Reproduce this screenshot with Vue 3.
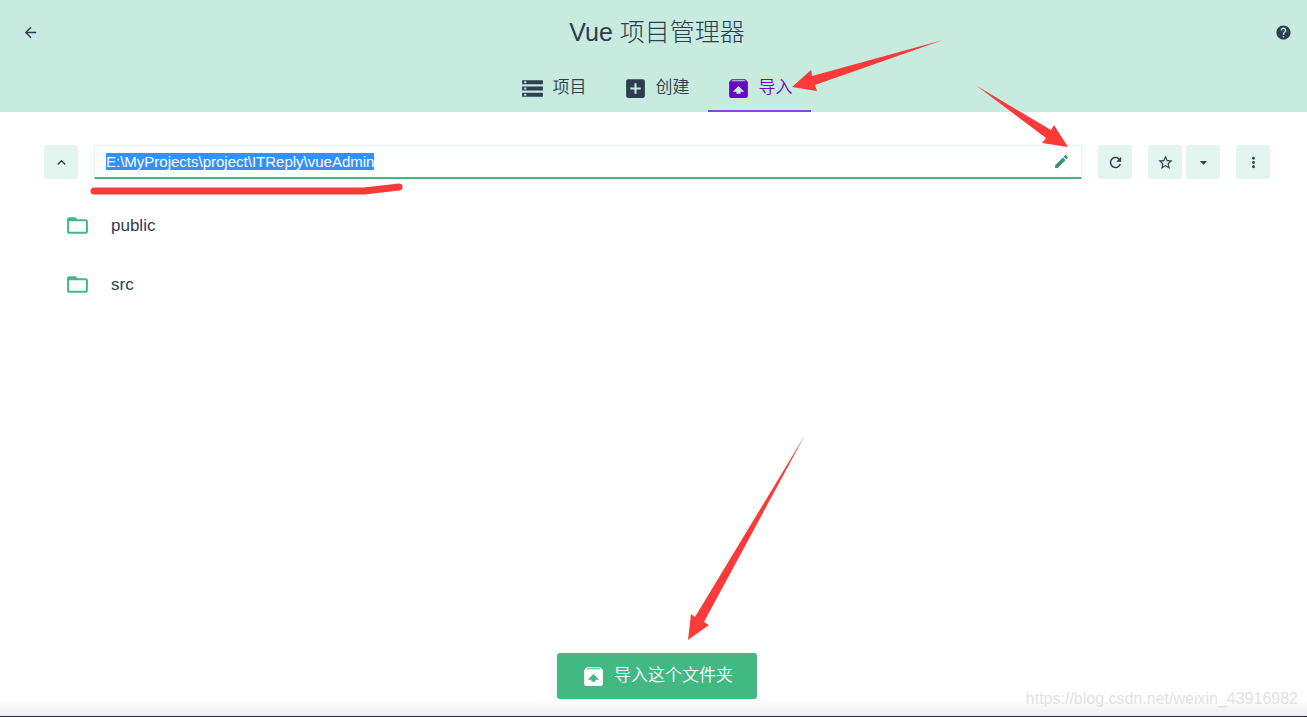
<script setup>
import { ref, onMounted } from 'vue'

const icons = {
  back: 'M20 11H7.83l5.59-5.59L12 4l-8 8 8 8 1.41-1.41L7.83 13H20v-2z',
  help: 'M12 2C6.48 2 2 6.48 2 12s4.48 10 10 10 10-4.48 10-10S17.52 2 12 2zm1 17h-2v-2h2v2zm2.07-7.75l-.9.92C13.45 12.9 13 13.5 13 15h-2v-.5c0-1.1.45-2.1 1.17-2.83l1.24-1.26c.37-.36.59-.86.59-1.41 0-1.1-.9-2-2-2s-2 .9-2 2H8c0-2.21 1.79-4 4-4s4 1.79 4 4c0 .88-.36 1.68-.93 2.25z',
  storage: 'M2 20h20v-4H2v4zm2-3h2v2H4v-2zM2 4v4h20V4H2zm4 3H4V5h2v2zm-4 7h20v-4H2v4zm2-3h2v2H4v-2z',
  addBox: 'M19 3H5c-1.11 0-2 .9-2 2v14c0 1.1.89 2 2 2h14c1.1 0 2-.9 2-2V5c0-1.1-.9-2-2-2zm-2 10h-4v4h-2v-4H7v-2h4V7h2v4h4v2z',
  unarchive: 'M20.55 5.22l-1.39-1.68C18.88 3.21 18.47 3 18 3H6c-.47 0-.88.21-1.15.55L3.46 5.22C3.17 5.57 3 6.01 3 6.5V19c0 1.1.89 2 2 2h14c1.1 0 2-.9 2-2V6.5c0-.49-.17-.93-.45-1.28zM12 9.5l5.5 5.5H14v2h-4v-2H6.5L12 9.5zM5.12 5l.82-1h12l.93 1H5.12z',
  up: 'M7.41 15.41L12 10.83l4.59 4.58L18 14l-6-6-6 6z',
  edit: 'M3 17.25V21h3.75L17.81 9.94l-3.75-3.75L3 17.25zM20.71 7.04c.39-.39.39-1.02 0-1.41l-2.34-2.34c-.39-.39-1.02-.39-1.41 0l-1.83 1.83 3.75 3.75 1.83-1.83z',
  refresh: 'M17.65 6.35C16.2 4.9 14.21 4 12 4c-4.42 0-7.99 3.58-7.99 8s3.57 8 7.99 8c3.73 0 6.84-2.55 7.73-6h-2.08c-.82 2.33-3.04 4-5.65 4-3.31 0-6-2.69-6-6s2.69-6 6-6c1.66 0 3.14.69 4.22 1.78L13 11h7V4l-2.35 2.35z',
  star: 'M22 9.24l-7.19-.62L12 2 9.19 8.63 2 9.24l5.46 4.73L5.82 21 12 17.27 18.18 21l-1.63-7.03L22 9.24zM12 15.4l-3.76 2.27 1-4.28-3.32-2.88 4.38-.38L12 6.1l1.71 4.04 4.38.38-3.32 2.88 1 4.28L12 15.4z',
  down: 'M7 10l5 5 5-5z',
  more: 'M12 8c1.1 0 2-.9 2-2s-.9-2-2-2-2 .9-2 2 .9 2 2 2zm0 2c-1.1 0-2 .9-2 2s.9 2 2 2 2-.9 2-2-.9-2-2-2zm0 6c-1.1 0-2 .9-2 2s.9 2 2 2 2-.9 2-2-.9-2-2-2z',
  folder: 'M20 6h-8l-2-2H4c-1.1 0-1.99.9-1.99 2L2 18c0 1.1.9 2 2 2h16c1.1 0 2-.9 2-2V8c0-1.1-.9-2-2-2zm0 12H4V8h16v10z'
}

const tabs = [
  { id: 'projects', label: '项目', icon: 'storage' },
  { id: 'create', label: '创建', icon: 'addBox' },
  { id: 'import', label: '导入', icon: 'unarchive' }
]
const active = ref('import')
const folders = ['public', 'src']
const path = ref('E:\\MyProjects\\project\\ITReply\\vueAdmin')
const pathInput = ref(null)

onMounted(() => {
  pathInput.value.focus()
  pathInput.value.select()
})
</script>

<template>
  <div class="page">
    <header class="header">
      <div class="title-row">
        <button class="plain" aria-label="返回">
          <svg class="icon small" viewBox="0 0 24 24"><path :d="icons.back" /></svg>
        </button>
        <h1>Vue 项目管理器</h1>
        <button class="plain" aria-label="帮助">
          <svg class="icon small" viewBox="0 0 24 24"><path :d="icons.help" /></svg>
        </button>
      </div>
      <nav class="tabs">
        <a
          v-for="tab in tabs"
          :key="tab.id"
          :href="'#' + tab.id"
          class="tab"
          :class="{ active: active === tab.id }"
          @click.prevent="active = tab.id"
        >
          <svg class="icon" viewBox="0 0 24 24"><path :d="icons[tab.icon]" /></svg>
          <span>{{ tab.label }}</span>
        </a>
        <svg class="mark mark-tab" viewBox="0 0 152 52" aria-hidden="true">
          <path d="M0 47L19 30L20 36L151 0L23 45L25 51Z" />
        </svg>
      </nav>
    </header>

    <main class="content">
      <div class="toolbar">
        <button class="tool" aria-label="上级目录">
          <svg class="icon small" viewBox="0 0 24 24"><path :d="icons.up" /></svg>
        </button>
        <div class="field">
          <input ref="pathInput" v-model="path" type="text" aria-label="路径" spellcheck="false" />
          <button class="plain edit" aria-label="编辑路径">
            <svg class="icon small" viewBox="0 0 24 24"><path :d="icons.edit" /></svg>
          </button>
          <svg class="mark mark-edit" viewBox="0 0 92 62" aria-hidden="true">
            <path d="M0 0L74 44L77 39L91 61L65 57L69 52Z" />
          </svg>
          <svg class="mark mark-line" viewBox="0 0 314 14" aria-hidden="true">
            <polyline points="5,9 275,9 310,5" />
          </svg>
        </div>
        <button class="tool" aria-label="刷新">
          <svg class="icon small" viewBox="0 0 24 24"><path :d="icons.refresh" /></svg>
        </button>
        <div class="pair">
          <button class="tool" aria-label="收藏">
            <svg class="icon small" viewBox="0 0 24 24"><path :d="icons.star" /></svg>
          </button>
          <button class="tool" aria-label="收藏夹">
            <svg class="icon small" viewBox="0 0 24 24"><path :d="icons.down" /></svg>
          </button>
        </div>
        <button class="tool" aria-label="更多">
          <svg class="icon small" viewBox="0 0 24 24"><path :d="icons.more" /></svg>
        </button>
      </div>

      <ul class="folders">
        <li v-for="name in folders" :key="name">
          <svg class="icon" viewBox="0 0 24 24"><path :d="icons.folder" /></svg>
          <span>{{ name }}</span>
        </li>
      </ul>
    </main>

    <footer class="footer">
      <div class="action">
        <button class="primary">
          <svg class="icon" viewBox="0 0 24 24"><path :d="icons.unarchive" /></svg>
          <span>导入这个文件夹</span>
        </button>
        <svg class="mark mark-import" viewBox="0 0 118 206" aria-hidden="true">
          <path d="M117 0L16 187L21 190L0 205L3 179L7 182Z" />
        </svg>
      </div>
    </footer>
    <span class="watermark">https://blog.csdn.net/weixin_43916982</span>
  </div>
</template>

<style>
body {
  margin: 0;
}
</style>

<style scoped>
.page {
  position: relative;
  box-sizing: border-box;
  min-height: 100vh;
  display: flex;
  flex-direction: column;
  overflow: hidden;
  border-bottom: 1px solid #1d2935;
  background: linear-gradient(to top, #eee, #fff 16px);
  color: #2c3e50;
  font-family: "Liberation Sans", "Noto Sans CJK SC", sans-serif;
  font-size: 17px;
  line-height: 24px;
}
button {
  font: inherit;
  color: inherit;
  border: 0;
  padding: 0;
  cursor: pointer;
}
.icon {
  display: block;
  flex: none;
  width: 25px;
  height: 25px;
  fill: currentColor;
}
.icon.small {
  width: 17px;
  height: 17px;
}
.plain {
  background: none;
}
.header {
  padding-left: 5px;
  background: #c7ebdf;
}
.title-row {
  height: 64px;
  padding: 0 15px 0 17px;
  display: flex;
  align-items: center;
  justify-content: space-between;
}
h1 {
  margin: 0;
  font-size: 25px;
  line-height: 32px;
  font-weight: 300;
}
.tabs {
  position: relative;
  display: flex;
  justify-content: center;
}
.tab {
  box-sizing: border-box;
  height: 48px;
  padding: 2px 18px 0;
  display: flex;
  align-items: center;
  gap: 8px;
  border-bottom: 2px solid transparent;
  color: inherit;
  font-weight: 350;
  text-decoration: none;
}
.tab.active {
  color: #6806c1;
  border-color: #8549cb;
}
.content {
  flex: 1;
  padding: 33px 37px 0 44px;
}
.toolbar {
  display: flex;
  gap: 16px;
}
.tool {
  width: 34px;
  height: 34px;
  display: flex;
  align-items: center;
  justify-content: center;
  border-radius: 3px;
  background: #e4f4ee;
}
.pair {
  display: flex;
  gap: 4px;
}
.field {
  position: relative;
  box-sizing: border-box;
  flex: 1;
  height: 34px;
  padding: 0 11px;
  display: flex;
  align-items: center;
  border: 1px solid #e4f4ee;
  border-bottom: 2px solid #42b983;
  border-radius: 3px 3px 0 0;
}
input {
  flex: 1;
  min-width: 0;
  padding: 0;
  border: 0;
  outline: 0;
  background: none;
  color: inherit;
  font-family: inherit;
  font-size: 15px;
}
input::selection {
  background: #3390ff;
  color: #fff;
}
.edit {
  color: #36946a;
}
.folders {
  list-style: none;
  margin: 17px 0 0;
  padding: 0;
}
.folders li {
  height: 59px;
  padding-left: 21px;
  display: flex;
  align-items: center;
  gap: 21px;
}
.folders .icon {
  color: #42b983;
}
.footer {
  padding: 0 0 17px 7px;
  display: flex;
  justify-content: center;
}
.action {
  position: relative;
}
.primary {
  height: 46px;
  padding: 0 24px;
  display: flex;
  align-items: center;
  gap: 8px;
  border-radius: 3px;
  background: #42b983;
  color: #fff;
  font-weight: 350;
}
/* Hand-drawn annotations lie over the controls they point at */
.mark {
  position: absolute;
  z-index: 1;
  pointer-events: none;
  fill: #fd3a3a;
}
.mark-tab {
  left: calc(50% + 136px);
  bottom: 20px;
  width: 152px;
  height: 52px;
}
.mark-edit {
  right: 12px;
  bottom: 29px;
  width: 92px;
  height: 62px;
}
.mark-line {
  left: -6px;
  top: 36px;
  width: 314px;
  height: 14px;
  fill: none;
  stroke: #fd3a3a;
  stroke-width: 7;
  stroke-linecap: round;
  stroke-linejoin: round;
}
.mark-import {
  left: 131px;
  bottom: 58px;
  width: 118px;
  height: 206px;
}
.watermark {
  position: absolute;
  right: 9px;
  bottom: 5px;
  color: #e2e2e2;
  font-size: 16px;
}
</style>
